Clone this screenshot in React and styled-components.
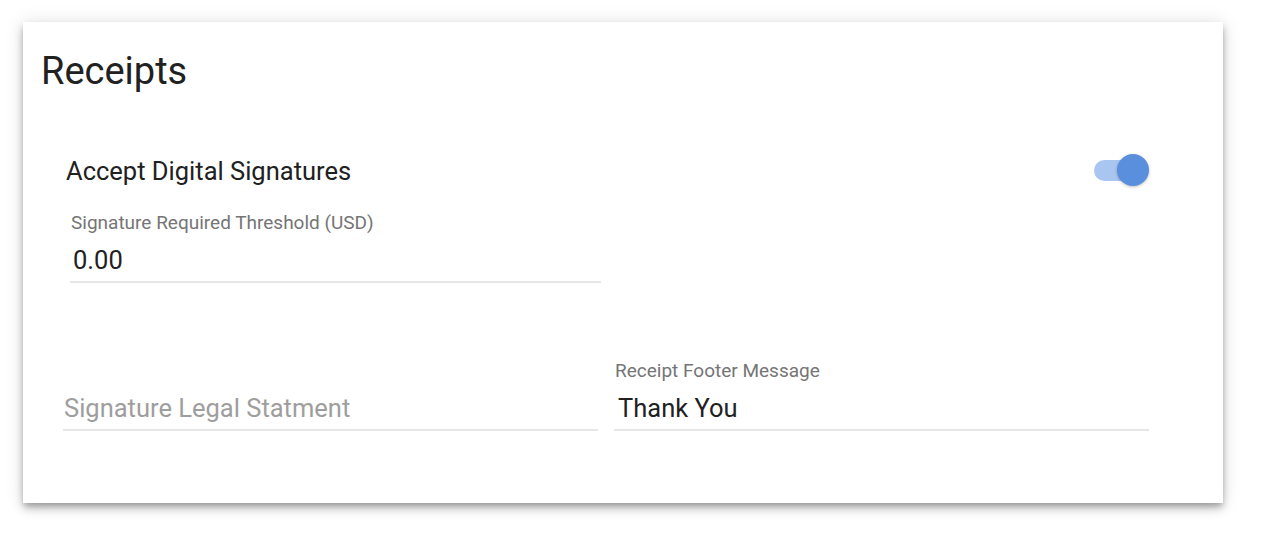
import React, { useState } from 'react';
import styled, { createGlobalStyle } from 'styled-components';

const GlobalStyle = createGlobalStyle`
  html, body {
    margin: 0;
    padding: 0;
    background: #ffffff;
    font-family: Roboto, "Noto Sans", "Liberation Sans", sans-serif;
    color: #212121;
  }
`;

const Page = styled.div`
  box-sizing: border-box;
  min-height: 100vh;
  padding: 22px 0 40px 23px;
`;

const Card = styled.section`
  box-sizing: border-box;
  width: 1200px;
  height: 481px;
  padding: 27px 18px 0;
  background: #fff;
  box-shadow: 0 4px 6px -1px rgba(0, 0, 0, 0.26),
    0 6px 10px 0 rgba(0, 0, 0, 0.14), 0 1px 18px 0 rgba(0, 0, 0, 0.12);
`;

const Title = styled.h2`
  margin: 0;
  font-size: 38px;
  line-height: 44px;
  font-weight: 400;
  color: #212121;
`;

const Body = styled.div`
  width: 1086px;
  margin: 60px 0 0 22px;
`;

const ToggleRow = styled.div`
  display: flex;
  align-items: center;
  justify-content: space-between;
  height: 34px;
  padding-left: 3px;
`;

const ToggleLabel = styled.span`
  font-size: 25.5px;
  line-height: 32px;
  margin-top: 2px;
  color: #212121;
`;

const Switch = styled.button`
  position: relative;
  width: 55px;
  height: 34px;
  padding: 0;
  border: 0;
  background: transparent;
  cursor: pointer;
`;

const Track = styled.span`
  display: block;
  width: 52px;
  height: 21px;
  border-radius: 11px;
  background: ${(p) => (p.$on ? '#a9c6f0' : '#c8c8c8')};
`;

const Thumb = styled.span`
  position: absolute;
  top: 1px;
  ${(p) => (p.$on ? 'right: 0;' : 'left: 0;')}
  width: 32px;
  height: 32px;
  border-radius: 50%;
  background: ${(p) => (p.$on ? '#5a8fdd' : '#f5f5f5')};
  box-shadow: 0 1px 3px rgba(0, 0, 0, 0.25);
`;

const Field = styled.label`
  display: flex;
  flex-direction: column;
  width: ${(p) => p.$width || 'auto'};
  margin-left: ${(p) => p.$inset || 0}px;
  margin-top: ${(p) => p.$top || 0}px;
  border-bottom: 2px solid #e6e6e6;
  padding-bottom: 5px;
`;

const FieldLabel = styled.span`
  font-size: 19px;
  line-height: 22px;
  color: #757575;
  margin-bottom: 10px;
  padding-left: 1px;
`;

const Input = styled.input`
  border: 0;
  outline: none;
  padding: 0 0 0 ${(p) => p.$pad || 3}px;
  margin: 0;
  height: 32px;
  font-family: inherit;
  font-size: 25.5px;
  line-height: 32px;
  color: #212121;
  background: transparent;

  &::placeholder {
    color: #9e9e9e;
    opacity: 1;
  }
`;

const Grid = styled.div`
  display: grid;
  grid-template-columns: 535px 535px;
  column-gap: 16px;
  align-items: end;
  margin-top: 77px;
`;

export default function App() {
  const [on, setOn] = useState(true);
  const [threshold, setThreshold] = useState('0.00');
  const [footer, setFooter] = useState('Thank You');
  const [legal, setLegal] = useState('');

  return (
    <>
      <GlobalStyle />
      <Page>
        <Card>
          <Title>Receipts</Title>
          <Body>
            <ToggleRow>
              <ToggleLabel>Accept Digital Signatures</ToggleLabel>
              <Switch type="button" onClick={() => setOn(!on)} aria-pressed={on}>
                <Track $on={on} />
                <Thumb $on={on} />
              </Switch>
            </ToggleRow>
            <Field $width="531px" $inset={7} $top={25}>
              <FieldLabel>Signature Required Threshold (USD)</FieldLabel>
              <Input value={threshold} onChange={(e) => setThreshold(e.target.value)} />
            </Field>
            <Grid>
              <Field>
                <Input
                  $pad={1}
                  placeholder="Signature Legal Statment"
                  value={legal}
                  onChange={(e) => setLegal(e.target.value)}
                />
              </Field>
              <Field>
                <FieldLabel>Receipt Footer Message</FieldLabel>
                <Input $pad={4} value={footer} onChange={(e) => setFooter(e.target.value)} />
              </Field>
            </Grid>
          </Body>
        </Card>
      </Page>
    </>
  );
}
